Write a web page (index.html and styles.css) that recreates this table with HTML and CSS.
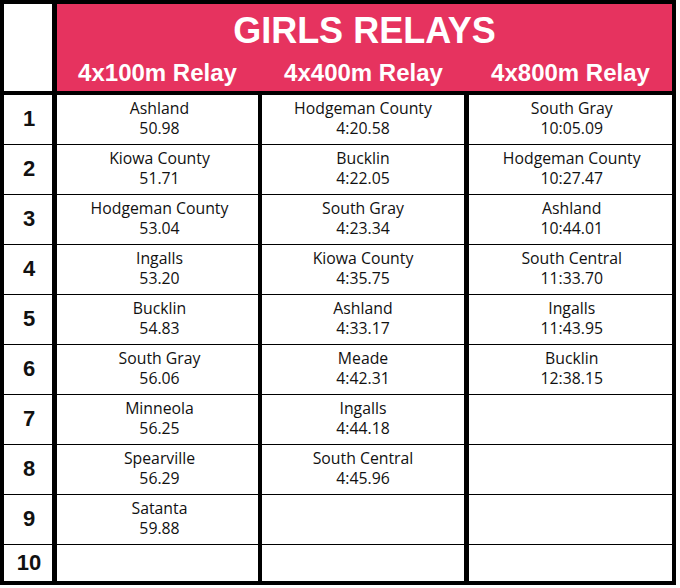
FILE: index.html
```html
<!DOCTYPE html>
<html lang="en">
<head>
<meta charset="utf-8">
<title>Girls Relays</title>
<link rel="stylesheet" href="styles.css">
</head>
<body>
<div class="board">
  <div class="head">
    <div class="corner"></div>
    <div class="banner">
      <div class="title">GIRLS RELAYS</div>
      <div class="events">
        <div class="event">4x100m Relay</div>
        <div class="event">4x400m Relay</div>
        <div class="event">4x800m Relay</div>
      </div>
    </div>
  </div>
  <div class="body">
    <div class="num">1</div>
    <div class="cell first"><span>Ashland</span><span>50.98</span></div>
    <div class="cell"><span>Hodgeman County</span><span>4:20.58</span></div>
    <div class="cell last"><span>South Gray</span><span>10:05.09</span></div>

    <div class="num">2</div>
    <div class="cell first"><span>Kiowa County</span><span>51.71</span></div>
    <div class="cell"><span>Bucklin</span><span>4:22.05</span></div>
    <div class="cell last"><span>Hodgeman County</span><span>10:27.47</span></div>

    <div class="num">3</div>
    <div class="cell first"><span>Hodgeman County</span><span>53.04</span></div>
    <div class="cell"><span>South Gray</span><span>4:23.34</span></div>
    <div class="cell last"><span>Ashland</span><span>10:44.01</span></div>

    <div class="num">4</div>
    <div class="cell first"><span>Ingalls</span><span>53.20</span></div>
    <div class="cell"><span>Kiowa County</span><span>4:35.75</span></div>
    <div class="cell last"><span>South Central</span><span>11:33.70</span></div>

    <div class="num">5</div>
    <div class="cell first"><span>Bucklin</span><span>54.83</span></div>
    <div class="cell"><span>Ashland</span><span>4:33.17</span></div>
    <div class="cell last"><span>Ingalls</span><span>11:43.95</span></div>

    <div class="num">6</div>
    <div class="cell first"><span>South Gray</span><span>56.06</span></div>
    <div class="cell"><span>Meade</span><span>4:42.31</span></div>
    <div class="cell last"><span>Bucklin</span><span>12:38.15</span></div>

    <div class="num">7</div>
    <div class="cell first"><span>Minneola</span><span>56.25</span></div>
    <div class="cell"><span>Ingalls</span><span>4:44.18</span></div>
    <div class="cell last"></div>

    <div class="num">8</div>
    <div class="cell first"><span>Spearville</span><span>56.29</span></div>
    <div class="cell"><span>South Central</span><span>4:45.96</span></div>
    <div class="cell last"></div>

    <div class="num">9</div>
    <div class="cell first"><span>Satanta</span><span>59.88</span></div>
    <div class="cell"></div>
    <div class="cell last"></div>

    <div class="num">10</div>
    <div class="cell first"></div>
    <div class="cell"></div>
    <div class="cell last"></div>
  </div>
</div>
</body>
</html>
```

FILE: styles.css
```css
html, body {
  margin: 0;
  padding: 0;
  background: #ffffff;
}

.board {
  box-sizing: border-box;
  width: 676px;
  height: 585px;
  padding: 4px;
  background: #000000;
  display: flex;
  flex-direction: column;
  gap: 4px;
}

.head {
  display: grid;
  grid-template-columns: 48px 1fr;
  column-gap: 5px;
  height: 87px;
}

.corner {
  background: #ffffff;
}

.banner {
  background: #e6335f;
  color: #ffffff;
  font-family: "Liberation Sans", Arial, sans-serif;
  font-weight: bold;
  padding-top: 8px;
}

.title {
  font-size: 36px;
  line-height: 38px;
  text-align: center;
}

.events {
  display: grid;
  grid-template-columns: 201px 202px 1fr;
  column-gap: 4.5px;
  margin-top: 9px;
}

.event {
  font-size: 24px;
  line-height: 28px;
  text-align: center;
}

.body {
  flex: 1;
  display: grid;
  grid-template-columns: 48px 201px 202px 1fr;
  grid-template-rows: repeat(9, 48.5px) 1fr;
  column-gap: 4.5px;
  row-gap: 1.5px;
}

.num {
  background: #ffffff;
  display: flex;
  align-items: center;
  justify-content: center;
  padding-left: 2px;
  font-family: "Liberation Sans", Arial, sans-serif;
  font-weight: bold;
  font-size: 22px;
  color: #111111;
}

.cell {
  background: #ffffff;
  display: flex;
  flex-direction: column;
  align-items: center;
  justify-content: center;
  padding-bottom: 2px;
  font-family: "Open Sans", "Noto Sans", sans-serif;
  font-size: 15.8px;
  line-height: 20px;
  color: #111111;
}

.cell.first {
  padding-left: 5px;
}

.cell.last {
  padding-left: 3px;
}
```
